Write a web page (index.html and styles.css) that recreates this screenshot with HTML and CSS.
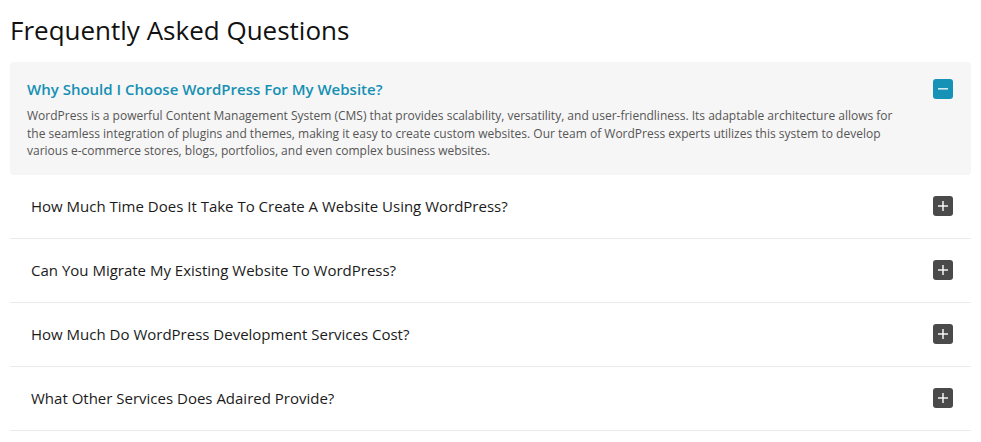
FILE: index.html
```html
<!DOCTYPE html>
<html lang="en">
<head>
<meta charset="utf-8">
<title>FAQ</title>
<link rel="stylesheet" href="styles.css">
</head>
<body>
<section class="faq">
  <h1 class="faq-title">Frequently Asked Questions</h1>
  <div class="faq-item open">
    <div class="faq-head">
      <h3 class="faq-q">Why Should I Choose WordPress For My Website?</h3>
      <span class="toggle toggle-open"><svg width="20" height="20" viewBox="0 0 20 20"><rect x="5" y="9" width="10" height="1.6" fill="#cfe9f1"/></svg></span>
    </div>
    <p class="faq-a">WordPress is a powerful Content Management System (CMS) that provides scalability, versatility, and user-friendliness. Its adaptable architecture allows for the seamless integration of plugins and themes, making it easy to create custom websites. Our team of WordPress experts utilizes this system to develop various e-commerce stores, blogs, portfolios, and even complex business websites.</p>
  </div>
  <div class="faq-item">
    <div class="faq-head">
      <h3 class="faq-q">How Much Time Does It Take To Create A Website Using WordPress?</h3>
      <span class="toggle"><svg width="20" height="20" viewBox="0 0 20 20"><rect x="5" y="9.3" width="10" height="1.4" fill="#fff"/><rect x="9.3" y="5" width="1.4" height="10" fill="#fff"/></svg></span>
    </div>
  </div>
  <div class="faq-item">
    <div class="faq-head">
      <h3 class="faq-q">Can You Migrate My Existing Website To WordPress?</h3>
      <span class="toggle"><svg width="20" height="20" viewBox="0 0 20 20"><rect x="5" y="9.3" width="10" height="1.4" fill="#fff"/><rect x="9.3" y="5" width="1.4" height="10" fill="#fff"/></svg></span>
    </div>
  </div>
  <div class="faq-item">
    <div class="faq-head">
      <h3 class="faq-q">How Much Do WordPress Development Services Cost?</h3>
      <span class="toggle"><svg width="20" height="20" viewBox="0 0 20 20"><rect x="5" y="9.3" width="10" height="1.4" fill="#fff"/><rect x="9.3" y="5" width="1.4" height="10" fill="#fff"/></svg></span>
    </div>
  </div>
  <div class="faq-item">
    <div class="faq-head">
      <h3 class="faq-q">What Other Services Does Adaired Provide?</h3>
      <span class="toggle"><svg width="20" height="20" viewBox="0 0 20 20"><rect x="5" y="9.3" width="10" height="1.4" fill="#fff"/><rect x="9.3" y="5" width="1.4" height="10" fill="#fff"/></svg></span>
    </div>
  </div>
</section>
</body>
</html>
```

FILE: styles.css
```css
* { box-sizing: border-box; }
body {
  margin: 0;
  background: #fff;
  font-family: "Open Sans", "Noto Sans", sans-serif;
  color: #1b1b1b;
}
.faq {
  padding: 0 10px;
}
.faq-title {
  margin: 0;
  padding-top: 13px;
  height: 62px;
  font-size: 26px;
  font-weight: 400;
  line-height: 34px;
  color: #111;
}
.faq-item {
  border-bottom: 1px solid #ebebeb;
}
.faq-item.open {
  background: #f6f6f6;
  border-radius: 4px;
  border-bottom: none;
  padding: 16px 18px 15px 17px;
}
.faq-head {
  display: flex;
  align-items: center;
  justify-content: space-between;
  height: 63px;
  padding: 0 18px 0 21px;
}
.open .faq-head {
  height: auto;
  padding: 0;
}
.faq-q {
  margin: 0;
  font-size: 15px;
  font-weight: 500;
  line-height: 22px;
  color: #1b1b1b;
}
.open .faq-q {
  color: #1590b4;
  font-weight: 600;
}
.toggle {
  width: 20px;
  height: 20px;
  border-radius: 3px;
  background: #4a4a4a;
  display: flex;
}
.toggle-open {
  background: #1592b6;
}
.faq-a {
  margin: 7px 50px 0 0;
  font-size: 12px;
  line-height: 17.5px;
  color: #555;
}
```
